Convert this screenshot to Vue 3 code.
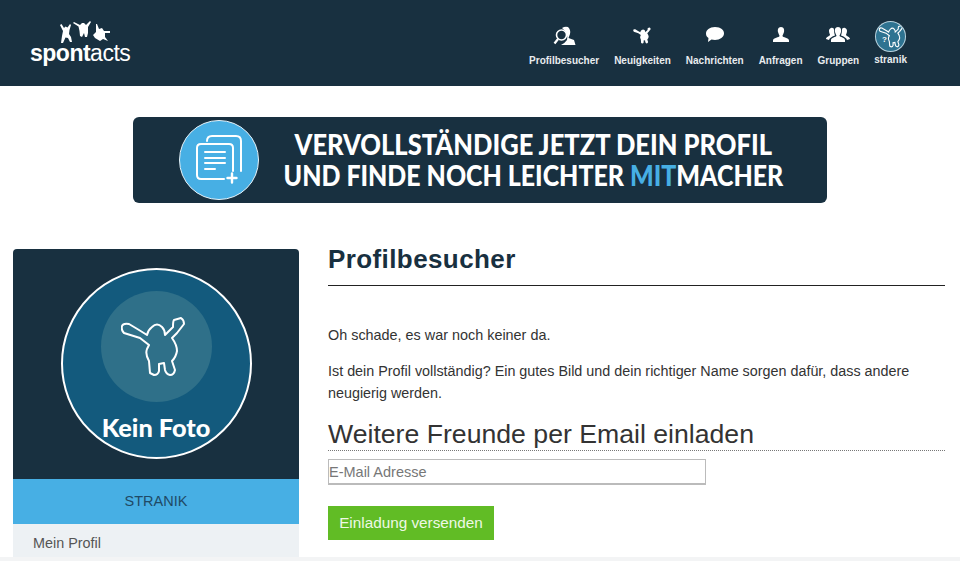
<script setup>
const navItems = [
  { label: 'Profilbesucher', icon: 'visitor' },
  { label: 'Neuigkeiten', icon: 'jump' },
  { label: 'Nachrichten', icon: 'chat' },
  { label: 'Anfragen', icon: 'person' },
  { label: 'Gruppen', icon: 'group' },
]
const figure = 'M1 10 Q2 7 8 8 L18 14 L26 19 Q27 14 31 11 Q36 6 41 11 Q44 14 44 19 L52 11 Q52 5 53 4 L60 2 Q63 4 63 8 L56 17 L51 22 Q56 29 56 35 Q55 41 51 45 L54 54 Q53 59 49 59 Q45 58 44 54 L43 47 L38 48 L38 55 Q37 59 33 59 L29 57 L28 45 Q24 38 26 33 L28 29 L19 22 L3 17 Q0 14 1 10 Z'
</script>

<template>
  <div class="page">
    <header class="topbar">
      <div class="logo">
        <svg class="logo-figs" width="54" height="25" viewBox="58 20 54 25">
          <path fill="#fff" d="M60 25 L61.500 24 L64 28 L65.500 26.500 L67.500 27.500 L70 24 L71 25 L69.500 30 L69 34 L71 37 L72 42 L70 42 L68 38 L65.500 37.500 L63 43 L61 43 L62 36 L63 31 Z" />
          <path fill="#fff" d="M73 23 L74 22 L80 25 L82 23 L84 23 L86 25 L90 21 L91 22 L88 27 L88 33 L87 37 L85 37 L84 33 L82 37 L80 36 L79.500 31 L78.500 26.500 Z" />
          <path fill="#fff" d="M96 24 L97 24 L99 29 L102 28 L104 31 L110 31 L110 33 L105 33 L105 37 L108 41 L103 39 L100 41 L95 38 L93 35 L96 32 Z" />
        </svg>
        <div class="logo-word"><b>spont</b><span>acts</span></div>
      </div>
      <nav class="nav">
        <a v-for="item in navItems" :key="item.label" class="nav-item">
          <svg class="nav-icon" width="24" height="22" viewBox="0 0 24 22">
            <template v-if="item.icon === 'visitor'">
              <path fill="#fff" d="M10 4 Q13 2 16 3 Q19 6 18 10 L16.500 14 L22 16 L23.500 21 H9 Q13 19 15 16 Q16.500 9 10 4 Z" />
              <circle cx="9.500" cy="11" r="5" fill="none" stroke="#fff" stroke-width="1.600" />
              <path stroke="#fff" stroke-width="2.200" d="M6 15 L2.500 19.500" />
            </template>
            <template v-else-if="item.icon === 'jump'">
              <path fill="#fff" transform="translate(3,3) scale(0.28)" :d="figure" />
            </template>
            <template v-else-if="item.icon === 'chat'">
              <path fill="#fff" d="M12 3 C18 3 21 6 21 9.500 C21 13 17 16 12 16 C10.500 16 9.500 15.800 8.500 15.500 L5 18 L5.500 14 C3.500 13 3 11 3 9.500 C3 6 6.500 3 12 3 Z" />
            </template>
            <template v-else-if="item.icon === 'person'">
              <path fill="#fff" d="M12 3 C15 3 15.500 6 15 8 C14.500 10 13.500 11 13.500 12 C13.500 13.500 20 13.500 20 16.500 L20 18 L4 18 L4 16.500 C4 13.500 10.500 13.500 10.500 12 C10.500 11 9.500 10 9 8 C8.500 6 9 3 12 3 Z" />
            </template>
            <template v-else>
              <path fill="#fff" d="M12 3 C15 3 15.500 6 15 8 C14.500 10 13.500 11 13.500 12 C14 13 19 13.500 19 16 L19 18 L5 18 L5 16 C5 13.500 10 13 10.500 12 C10.500 11 9.500 10 9 8 C8.500 6 9 3 12 3 Z" />
              <path fill="#fff" d="M5 4 C7 3.500 8 4.500 8 6 C8 8 8.500 10 9 11.500 C6 12.500 3.500 14 3 16 L0 15 C0 13 3.500 12 4 11 C4 10 3 9 3 7 C3 5.500 3.500 4.500 5 4 Z" />
              <path fill="#fff" d="M19 4 C17 3.500 16 4.500 16 6 C16 8 15.500 10 15 11.500 C18 12.500 20.500 14 21 16 L24 15 C24 13 20.500 12 20 11 C20 10 21 9 21 7 C21 5.500 20.500 4.500 19 4 Z" />
            </template>
          </svg>
          <span>{{ item.label }}</span>
        </a>
        <a class="nav-item nav-user">
          <span class="avatar">
            <svg width="29" height="29" viewBox="0 0 29 29">
              <path fill="none" stroke="#fff" stroke-width="3" transform="translate(3,3) scale(0.37)" :d="figure" />
              <text x="6" y="20" class="avatar-q">?</text>
            </svg>
          </span>
          <span>stranik</span>
        </a>
      </nav>
    </header>

    <div class="banner-row">
      <div class="banner">
        <span class="banner-disc">
          <svg width="50" height="50" viewBox="0 0 50 50" fill="none" stroke="#fff" stroke-width="2" stroke-linecap="round">
            <path d="M13 6 Q13 1 18 1 L42 1 Q47 1 47 6 L47 36" />
            <path d="M30 44 L7 44 Q3 44 3 40 L3 13 Q3 9 7 9 L35 9 Q39 9 39 13 L39 36" />
            <path d="M11 17 H31 M11 23 H31 M11 28 H31 M11 34 H21" />
            <path d="M38 38.500 V47.500 M33.500 43 H42.500" stroke-width="2.400" />
          </svg>
        </span>
        <div class="banner-text">
          <div class="banner-line"><span class="line-a">VERVOLLSTÄNDIGE JETZT DEIN PROFIL</span></div>
          <div class="banner-line"><span class="line-b">UND FINDE NOCH LEICHTER <em>MIT</em>MACHER</span></div>
        </div>
      </div>
    </div>

    <div class="columns">
      <aside class="sidebar">
        <div class="photo-panel">
          <div class="photo-disc">
            <div class="photo-inner">
              <svg width="64" height="61" viewBox="0 0 64 61">
                <path fill="none" stroke="#fff" stroke-width="2" stroke-linejoin="round" :d="figure" />
              </svg>
            </div>
            <div class="photo-caption">Kein Foto</div>
          </div>
        </div>
        <div class="user-bar">STRANIK</div>
        <div class="side-link">Mein Profil</div>
      </aside>

      <main class="content">
        <h1>Profilbesucher</h1>
        <p class="first">Oh schade, es war noch keiner da.</p>
        <p class="second">Ist dein Profil vollständig? Ein gutes Bild und dein richtiger Name sorgen dafür, dass andere neugierig werden.</p>
        <h2>Weitere Freunde per Email einladen</h2>
        <input class="email" type="text" placeholder="E-Mail Adresse" />
        <button class="send" type="button">Einladung versenden</button>
      </main>
    </div>
    <div class="foot-strip"></div>
  </div>
</template>

<style>
html, body { margin: 0; padding: 0; background: #fff; overflow: hidden; }
</style>

<style scoped>
.page {
  width: 960px;
  height: 561px;
  overflow: hidden;
  position: relative;
  font-family: "Liberation Sans", Arial, sans-serif;
  color: #333;
  background: #fff;
}
.topbar {
  height: 86px;
  background: #183040;
  display: flex;
  justify-content: space-between;
  box-sizing: border-box;
  padding: 0 53px 0 30px;
}
.logo { padding-top: 20px; width: 110px; }
.logo-figs { display: block; margin-left: 28px; }
.logo-word {
  font-size: 23px;
  line-height: 22px;
  margin-top: -3px;
  color: #fff;
  letter-spacing: -.5px;
  white-space: nowrap;
}
.logo-word b { font-weight: 700; }
.logo-word span { font-weight: 400; }
.nav { display: flex; gap: 15px; padding-top: 20px; }
.nav-item {
  display: flex;
  flex-direction: column;
  align-items: center;
  font-size: 10px;
  font-weight: 700;
  color: #e8ecef;
  line-height: 13px;
  white-space: nowrap;
}
.nav-icon { display: block; margin-top: 4px; margin-bottom: 8px; }
.nav-user { margin-top: 0; }
.avatar {
  width: 29px;
  height: 29px;
  border-radius: 50%;
  background: #2e7391;
  overflow: hidden;
  margin-top: 2px;
  margin-bottom: 2px;
  display: block;
  box-shadow: 0 0 0 1px #b9d4e0;
}
.avatar svg { display: block; }
.avatar-q { fill: #fff; font-size: 8px; font-weight: 700; }
.banner-row { display: flex; padding: 31px 0 0 133px; }
.banner {
  width: 694px;
  height: 86px;
  border-radius: 6px;
  background: #183040;
  display: flex;
  align-items: center;
  position: relative;
}
.banner-disc {
  width: 78px;
  height: 78px;
  margin-left: 46px;
  border-radius: 50%;
  background: #47afe4;
  border: 1px solid #e6f3fa;
  display: flex;
  align-items: center;
  justify-content: center;
  flex: none;
  box-sizing: content-box;
}
.banner-text {
  margin-left: 24px;
  width: 500px;
  color: #fff;
  font-family: Lato, "Open Sans", sans-serif;
  font-weight: 900;
  font-size: 27.500px;
  line-height: 31px;
  white-space: nowrap;
}
.banner-line { display: flex; justify-content: center; }
.banner-line span { display: block; flex: none; }
.line-a { transform: scaleX(.928); }
.line-b { transform: scaleX(.907); }
.banner-text em { font-style: normal; color: #47afe4; }
.columns {
  display: flex;
  gap: 29px;
  padding: 46px 15px 0 13px;
}
.sidebar { width: 286px; flex: none; }
.photo-panel {
  height: 230px;
  background: #183040;
  border-radius: 4px 4px 0 0;
  display: flex;
  justify-content: center;
  padding-top: 19px;
  box-sizing: border-box;
}
.photo-disc {
  width: 191px;
  height: 191px;
  border-radius: 50%;
  border: 2px solid #fff;
  box-sizing: border-box;
  background: #135a7d;
  display: flex;
  flex-direction: column;
  align-items: center;
}
.photo-inner {
  width: 111px;
  height: 111px;
  margin-top: 21px;
  padding-right: 7px;
  box-sizing: border-box;
  border-radius: 50%;
  background: #2f7089;
  display: flex;
  align-items: center;
  justify-content: center;
}
.photo-caption {
  margin-top: 9px;
  color: #fff;
  font-family: Lato, "Open Sans", sans-serif;
  font-weight: 900;
  font-size: 25.300px;
  line-height: 32px;
}
.user-bar {
  height: 45px;
  background: #47afe4;
  color: #1f4a66;
  font-size: 14.500px;
  line-height: 45px;
  text-align: center;
}
.side-link {
  height: 40px;
  background: #edf1f4;
  color: #555;
  font-size: 14.400px;
  line-height: 38px;
  padding-left: 20px;
}
.content { width: 617px; flex: none; }
h1 {
  margin: 0;
  height: 36px;
  border-bottom: 1px solid #222;
  color: #183040;
  font-size: 26px;
  font-weight: 700;
  line-height: 20px;
  letter-spacing: .4px;
}
.first { margin: 41px 0 0; font-size: 14.400px; line-height: 16px; color: #333; }
.second { margin: 17px 0 0; font-size: 14.350px; line-height: 22px; color: #333; }
h2 {
  margin: 15px 0 0;
  height: 31px;
  font-size: 26.650px;
  font-weight: 400;
  line-height: 30px;
  color: #333;
  border-bottom: 1px dotted #777;
}
.email {
  display: block;
  margin-top: 8px;
  width: 378px;
  height: 26px;
  box-sizing: border-box;
  border: 1px solid #bbb;
  border-width: 1px 1px 2px 1px;
  padding: 0;
  outline: none;
  font: 14.500px "Liberation Sans", Arial, sans-serif;
  color: #333;
}
.email::placeholder { color: #777; opacity: 1; }
.send {
  display: block;
  margin-top: 21px;
  width: 166px;
  height: 34px;
  border: 0;
  padding: 0;
  background: #61bc25;
  color: #eef8e6;
  font: 15.300px "Liberation Sans", Arial, sans-serif;
}
.foot-strip {
  position: absolute;
  left: 0;
  right: 0;
  bottom: 0;
  height: 4px;
  background: #f3f4f5;
}
</style>
